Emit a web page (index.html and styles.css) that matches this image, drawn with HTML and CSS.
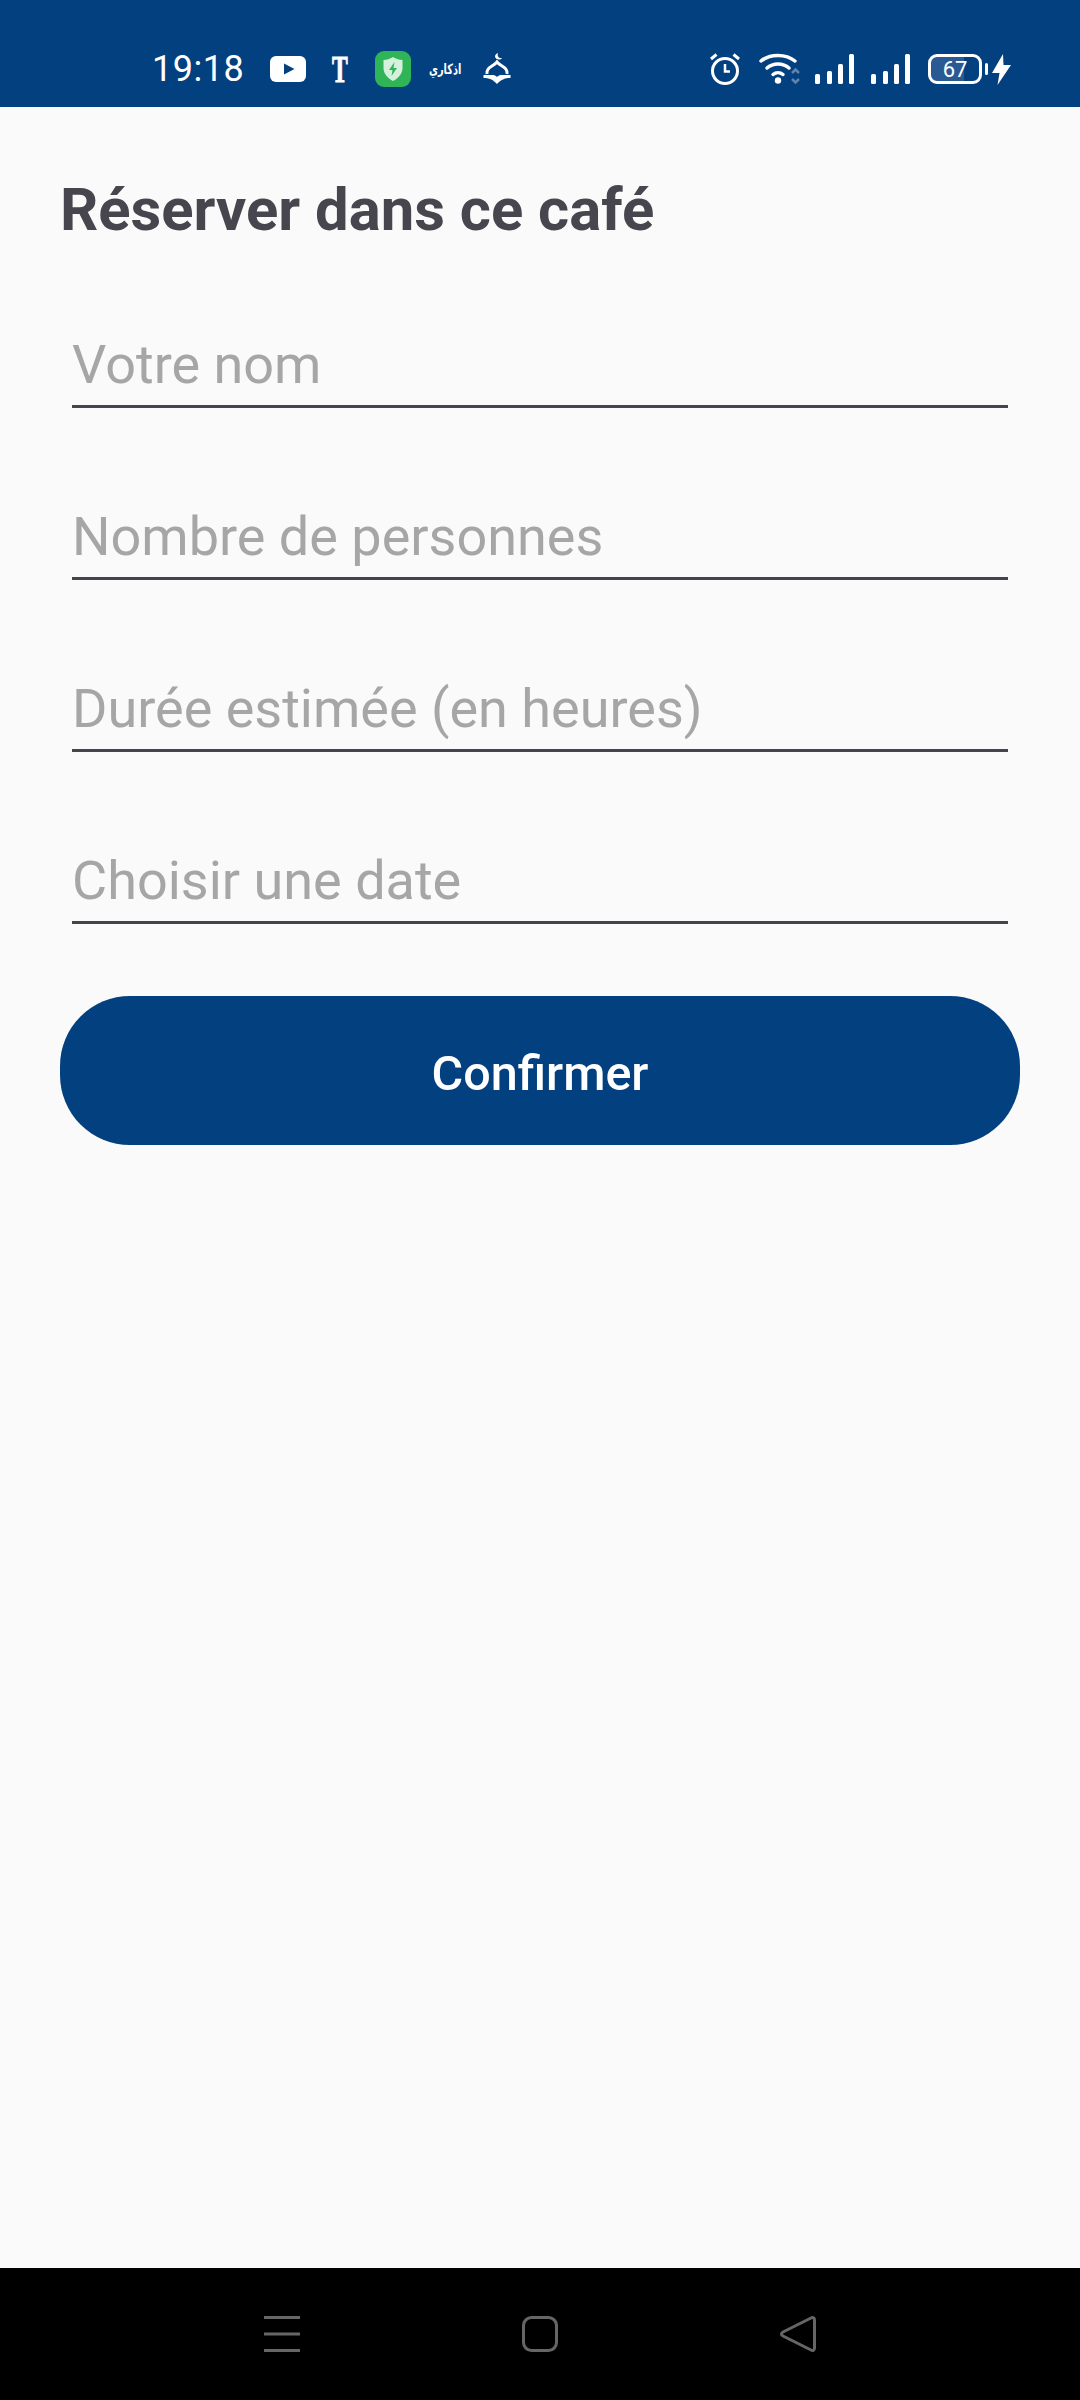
FILE: index.html
```html
<!DOCTYPE html>
<html lang="fr">
<head>
    <meta charset="UTF-8">
    <title>Réserver dans ce café</title>
    <link rel="stylesheet" href="styles.css">
</head>
<body>
    <div class="status-bar">
        <div class="status-left">
            <span class="time">19:18</span>
            <svg class="icon-youtube" width="36" height="26" viewBox="0 0 36 26">
                <rect width="36" height="26" rx="6" fill="#fff"/>
                <path d="M14 7.5 L24.5 13 L14 18.5 Z" fill="#03407f"/>
            </svg>
            <span class="icon-t">T</span>
            <svg class="icon-shield" width="36" height="36" viewBox="0 0 36 36">
                <rect width="36" height="36" rx="9" fill="#2fb457"/>
                <path d="M18 6 C21 8 24.500 9 27.500 9 L27.500 17 C27.500 23 23 27.500 18 30 C13 27.500 8.500 23 8.500 17 L8.500 9 C11.500 9 15 8 18 6 Z" fill="#d5f0dc"/>
                <path d="M19.500 11 L14 19 L17.500 19 L16.500 25 L22 17 L18.500 17 Z" fill="#2fb457"/>
            </svg>
            <span class="icon-arabic">اذكاري</span>
            <svg class="icon-mosque" width="28" height="32" viewBox="0 0 28 32">
                <path d="M15 0 C14 3 15.500 5.500 19 5 C17.500 7.500 12.500 7 12 3.500 C11.800 2 13.500 0.500 15 0 Z" fill="#fff"/>
                <path d="M4 21 C3 14 10 14 14 9 C18 14 25 14 24 21" fill="none" stroke="#fff" stroke-width="3"/>
                <path d="M0.500 22 L10 22 C12 22 13 23 14 24 C15 23 16 22 18 22 L27.500 22 L27.500 25 C22 25 18 26.500 14 31 C10 26.500 6 25 0.500 25 Z" fill="#fff"/>
            </svg>
        </div>
        <div class="status-right">
            <svg class="icon-alarm" width="32" height="32" viewBox="0 0 32 32">
                <circle cx="16" cy="18" r="12.500" fill="none" stroke="#fff" stroke-width="3"/>
                <path d="M16 11 L16 18.500 L21 18.500" fill="none" stroke="#fff" stroke-width="2.500"/>
                <path d="M2 6 L7.500 1.500 M30 6 L24.500 1.500" fill="none" stroke="#fff" stroke-width="3"/>
            </svg>
            <svg class="icon-wifi" width="42" height="32" viewBox="0 0 42 32">
                <path d="M2 8 C11 0.500 27 0.500 36 8" fill="none" stroke="#fff" stroke-width="3.500" stroke-linecap="round"/>
                <path d="M8 15 C14 9.500 24 9.500 30 15" fill="none" stroke="#fff" stroke-width="3.500" stroke-linecap="round"/>
                <path d="M14 21.500 C17 19 21 19 24 21.500" fill="none" stroke="#fff" stroke-width="3.500" stroke-linecap="round"/>
                <circle cx="19" cy="27.500" r="3.200" fill="#fff"/>
                <path d="M33 20 L36.500 16.500 L40 20 M33 26 L36.500 29.500 L40 26" fill="none" stroke="#5f83ad" stroke-width="2.500"/>
            </svg>
            <svg class="icon-signal" width="40" height="30" viewBox="0 0 40 30">
                <rect x="0" y="20" width="5" height="10" rx="1.500" fill="#fff"/>
                <rect x="12" y="17" width="5" height="13" rx="1.500" fill="#fff"/>
                <rect x="23" y="10" width="5" height="20" rx="1.500" fill="#fff"/>
                <rect x="34" y="0" width="5" height="30" rx="1.500" fill="#fff"/>
            </svg>
            <svg class="icon-signal" width="40" height="30" viewBox="0 0 40 30">
                <rect x="0" y="20" width="5" height="10" rx="1.500" fill="#fff"/>
                <rect x="12" y="17" width="5" height="13" rx="1.500" fill="#fff"/>
                <rect x="23" y="10" width="5" height="20" rx="1.500" fill="#fff"/>
                <rect x="34" y="0" width="5" height="30" rx="1.500" fill="#fff"/>
            </svg>
            <div class="battery"><span>67</span></div>
            <svg class="icon-bolt" width="19" height="31" viewBox="0 0 19 31">
                <path d="M11 0 L0 19 L7.500 19 L5.500 31 L19 11 L11.500 11 Z" fill="#fff"/>
            </svg>
        </div>
    </div>

    <main class="content">
        <h1>Réserver dans ce café</h1>
        <form class="booking-form">
            <input type="text" placeholder="Votre nom">
            <input type="number" placeholder="Nombre de personnes">
            <input type="number" placeholder="Durée estimée (en heures)">
            <input type="text" placeholder="Choisir une date">
            <button type="button">Confirmer</button>
        </form>
    </main>

    <div class="nav-bar">
        <svg width="36" height="36" viewBox="0 0 36 36">
            <path d="M0 1.500 H36 M0 18 H36 M0 34.500 H36" stroke="#666" stroke-width="3"/>
        </svg>
        <svg width="36" height="36" viewBox="0 0 36 36">
            <rect x="1.500" y="1.500" width="33" height="33" rx="8" fill="none" stroke="#666" stroke-width="3"/>
        </svg>
        <svg width="36" height="36" viewBox="0 0 36 36">
            <path d="M31 2 C33 1 34.500 2 34.500 4 L34.500 32 C34.500 34 33 35 31 34 L3 20 C1 19 1 17 3 16 Z" fill="none" stroke="#666" stroke-width="3"/>
        </svg>
    </div>
</body>
</html>
```

FILE: styles.css
```css
* {
    box-sizing: border-box;
}
body {
    background-color: #fafafa;
    color: #47454d;
    font-family: Roboto, "Liberation Sans", sans-serif;
    margin: 0;
    height: 2400px;
    display: flex;
    flex-direction: column;
}

/* barre d'etat */
.status-bar {
    background-color: #03407f;
    color: white;
    height: 107px;
    flex-shrink: 0;
    display: flex;
    justify-content: space-between;
    align-items: center;
    padding: 31px 69px 0 152px;
}
.status-left,
.status-right {
    display: flex;
    align-items: center;
}
.time {
    font-size: 36px;
    letter-spacing: 0.5px;
    width: 118px;
}
.icon-t {
    font-family: "Liberation Serif", serif;
    font-size: 38px;
    font-weight: bold;
    line-height: 30px;
    width: 16px;
    margin-left: 26px;
    -webkit-text-stroke: 1px white;
    transform: scaleX(0.62);
    transform-origin: left center;
}
.icon-shield {
    margin-left: 27px;
}
.icon-arabic {
    font-family: "DejaVu Sans", sans-serif;
    font-size: 14px;
    font-weight: bold;
    width: 34px;
    margin-left: 18px;
    white-space: nowrap;
    transform: scaleX(0.7);
    transform-origin: left center;
}
.icon-mosque {
    margin-left: 20px;
}
.icon-wifi {
    margin-left: 18px;
}
.icon-signal {
    margin-left: 14px;
}
.icon-signal + .icon-signal {
    margin-left: 16px;
}
.battery {
    position: relative;
    width: 54px;
    height: 30px;
    margin-left: 17px;
    margin-right: 10px;
    border: 3px solid white;
    border-radius: 9px;
    background: linear-gradient(to right, #2a5a94 68%, transparent 68%);
    display: flex;
    align-items: center;
    justify-content: center;
    font-size: 22px;
}
.battery::after {
    content: "";
    position: absolute;
    right: -9px;
    top: 6px;
    width: 3px;
    height: 12px;
    border-radius: 2px;
    background-color: white;
}

/* contenu */
.content {
    flex: 1;
    padding: 0 60px;
}
h1 {
    font-size: 59.8px;
    font-weight: bold;
    line-height: 64px;
    margin: 71px 0 0 0;
}
.booking-form {
    display: flex;
    flex-direction: column;
    margin-top: 64px;
}
input {
    font-family: inherit;
    font-size: 54px;
    color: #47454d;
    background: transparent;
    height: 102px;
    margin: 0 12px 70px 12px;
    padding: 18px 0 0 0;
    border: none;
    border-bottom: 3px solid #44444c;
    border-radius: 0;
    outline: none;
}
input::placeholder {
    color: #a6a6a6;
    opacity: 1;
}
button {
    font-family: inherit;
    font-size: 48.5px;
    font-weight: 500;
    color: white;
    background-color: #03407f;
    height: 149px;
    margin-top: 2px;
    padding: 5px 0 0 0;
    border: none;
    border-radius: 70px;
    cursor: pointer;
}

/* navigation */
.nav-bar {
    background-color: black;
    height: 132px;
    flex-shrink: 0;
    display: flex;
    justify-content: space-between;
    padding: 48px 264px 0 264px;
}
```
